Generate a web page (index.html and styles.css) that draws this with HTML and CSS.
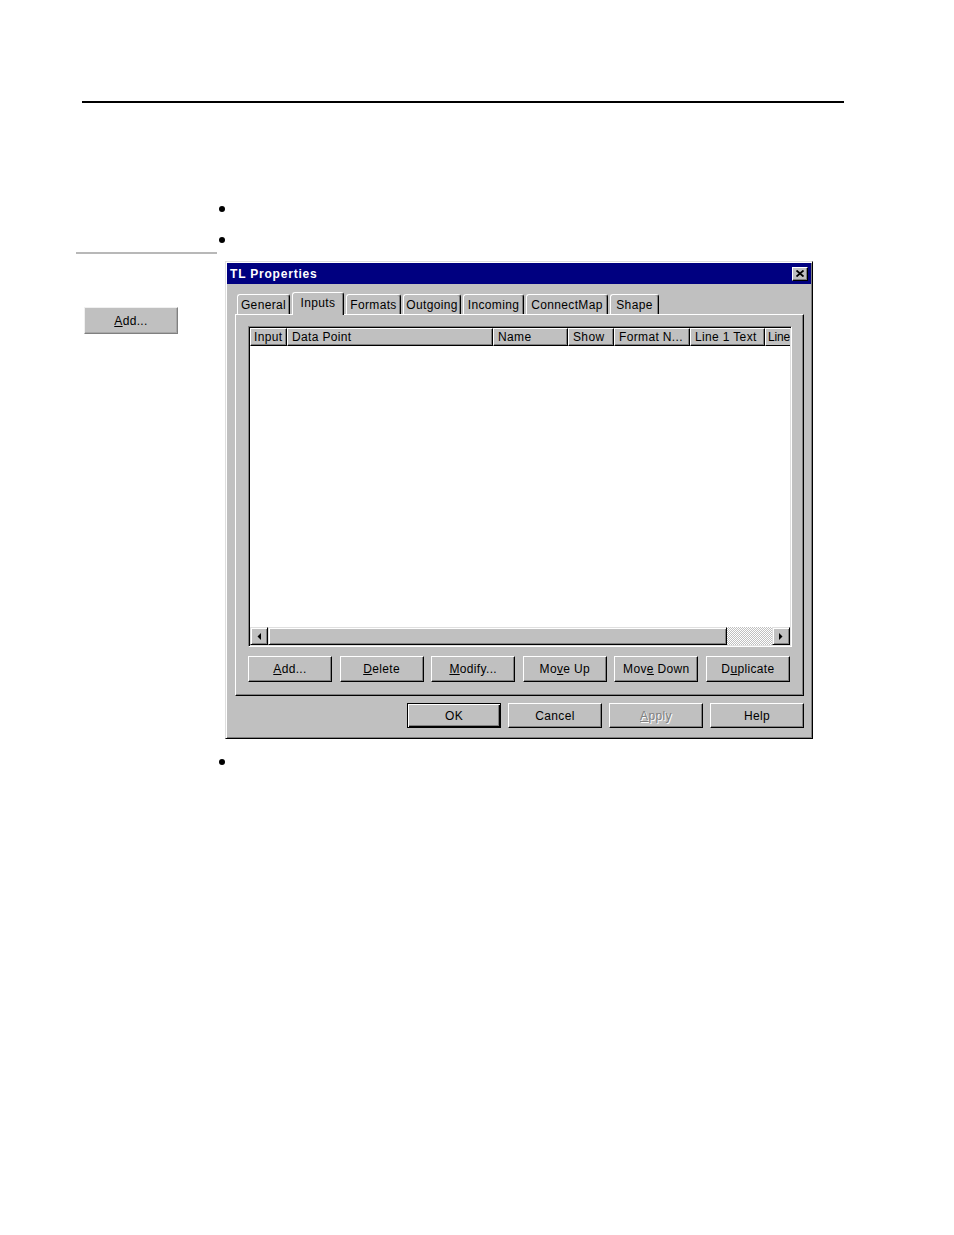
FILE: index.html
```html
<!DOCTYPE html>
<html>
<head>
<meta charset="utf-8">
<link rel="stylesheet" href="styles.css">
</head>
<body>
<div class="rule"></div>
<div class="section">
  <div class="aside">
    <div class="aside-line"></div>
    <div class="btn side-btn"><span><u>A</u>dd...</span></div>
  </div>
  <div class="main">
    <div class="dot d1"></div>
    <div class="dot d2"></div>
    <div class="dialog">
      <div class="titlebar">
        <span class="title">TL Properties</span>
        <span class="close"><svg width="8" height="7" viewBox="0 0 8 7"><path d="M0.5 0.5 L7.5 6.5 M7.5 0.5 L0.5 6.5" stroke="#000" stroke-width="1.8" fill="none"/></svg></span>
      </div>
      <div class="dlg-body">
        <div class="tabs">
          <div class="tab t-general">General</div>
          <div class="tab t-inputs active">Inputs</div>
          <div class="tab t-formats">Formats</div>
          <div class="tab t-outgoing">Outgoing</div>
          <div class="tab t-incoming">Incoming</div>
          <div class="tab t-connect">ConnectMap</div>
          <div class="tab t-shape">Shape</div>
        </div>
        <div class="panel">
          <div class="list">
            <div class="header">
              <div class="hcell c-input">Input</div>
              <div class="hcell c-dp">Data Point</div>
              <div class="hcell c-name">Name</div>
              <div class="hcell c-show">Show</div>
              <div class="hcell c-fmt">Format N...</div>
              <div class="hcell c-l1">Line 1 Text</div>
              <div class="hcell c-l2">Line</div>
            </div>
            <div class="rows"></div>
            <div class="hscroll">
              <div class="sb-btn"><svg width="4" height="7" viewBox="0 0 4 7"><polygon points="4,0 4,7 0.5,3.5" fill="#000"/></svg></div>
              <div class="sb-thumb"></div>
              <div class="sb-track"></div>
              <div class="sb-btn"><svg width="4" height="7" viewBox="0 0 4 7"><polygon points="0,0 0,7 3.5,3.5" fill="#000"/></svg></div>
            </div>
          </div>
          <div class="btn-row">
            <div class="btn"><span><u>A</u>dd...</span></div>
            <div class="btn"><span><u>D</u>elete</span></div>
            <div class="btn"><span><u>M</u>odify...</span></div>
            <div class="btn"><span>Mo<u>v</u>e Up</span></div>
            <div class="btn"><span>Mov<u>e</u> Down</span></div>
            <div class="btn"><span>D<u>u</u>plicate</span></div>
          </div>
        </div>
        <div class="dlg-buttons">
          <div class="btn big default"><span>OK</span></div>
          <div class="btn big"><span>Cancel</span></div>
          <div class="btn big disabled"><span><u>A</u>pply</span></div>
          <div class="btn big"><span>Help</span></div>
        </div>
      </div>
    </div>
    <div class="dot d3"></div>
  </div>
</div>
</body>
</html>
```
FILE: styles.css
```css
body {
  margin: 0;
  background: #fff;
  color: #000;
  font-family: "Liberation Sans", Arial, sans-serif;
  font-size: 12px;
  letter-spacing: 0.35px;
}

.rule {
  margin: 101px 0 0 82px;
  width: 762px;
  height: 2px;
  background: #000;
}

.section {
  display: flex;
  margin: 97px 0 0 76px;
}

.aside {
  width: 141px;
  flex: none;
}

.aside-line {
  margin-top: 52px;
  height: 2px;
  background: #b8b8b8;
}

.main {
  display: flex;
  flex-direction: column;
}

.dot {
  width: 6px;
  height: 6px;
  border-radius: 50%;
  background: #000;
  margin-left: 2px;
}
.d1 { margin-top: 6px; }
.d2 { margin-top: 25px; }
.d3 { margin-top: 20px; }

.dialog {
  margin: 18px 0 0 8px;
  width: 588px;
  height: 478px;
  box-sizing: border-box;
  background: #c0c0c0;
  border: 1px solid;
  border-color: #dfdfdf #000 #000 #dfdfdf;
  box-shadow: inset 1px 1px #fff, inset -1px -1px #808080;
  padding: 1px;
}

.titlebar {
  height: 21px;
  background: #000080;
  color: #fff;
  display: flex;
  align-items: center;
  justify-content: space-between;
  padding: 0 3px;
}
.title {
  font-weight: bold;
  letter-spacing: 0.8px;
}
.close {
  width: 16px;
  height: 14px;
  box-sizing: border-box;
  background: #c0c0c0;
  border: 1px solid;
  border-color: #fff #000 #000 #fff;
  box-shadow: inset -1px -1px #808080;
  display: flex;
  align-items: center;
  justify-content: center;
}

.dlg-body {
  padding: 8px 7px 9px 8px;
}

.tabs {
  display: flex;
  align-items: flex-end;
  height: 22px;
  padding-left: 2px;
}
.tab {
  height: 20px;
  box-sizing: border-box;
  margin-right: 2px;
  border: 1px solid;
  border-bottom: none;
  border-color: #fff #000 #000 #fff;
  box-shadow: inset -1px 0 #808080;
  border-radius: 3px 3px 0 0;
  display: flex;
  align-items: center;
  justify-content: center;
  white-space: nowrap;
  background: #c0c0c0;
}
.tab.active {
  height: 23px;
  margin-bottom: -1px;
  position: relative;
  z-index: 1;
  padding-bottom: 2px;
}
.t-general { width: 53px; }
.t-inputs { width: 52px; }
.t-formats { width: 55px; }
.t-outgoing { width: 58px; }
.t-incoming { width: 61px; }
.t-connect { width: 82px; }
.t-shape { width: 49px; }

.panel {
  width: 569px;
  height: 382px;
  box-sizing: border-box;
  border: 1px solid;
  border-color: #fff #000 #000 #fff;
  box-shadow: inset -1px -1px #808080;
  padding: 11px 11px 13px 12px;
}

.list {
  height: 321px;
  box-sizing: border-box;
  border: 1px solid;
  border-color: #808080 #fff #fff #808080;
  box-shadow: inset 1px 1px #000, inset -1px -1px #dfdfdf;
  padding: 1px;
  background: #fff;
  display: flex;
  flex-direction: column;
  overflow: hidden;
}
.header {
  display: flex;
  height: 18px;
  flex: none;
  overflow: hidden;
}
.hcell {
  flex: none;
  box-sizing: border-box;
  height: 18px;
  background: #c0c0c0;
  border: 1px solid;
  border-color: #fff #000 #000 #fff;
  box-shadow: inset -1px -1px #808080;
  padding-left: 4px;
  display: flex;
  align-items: center;
  white-space: nowrap;
  overflow: hidden;
}
.c-input { width: 37px; padding-left: 3px; }
.c-dp { width: 206px; }
.c-name { width: 75px; }
.c-show { width: 46px; }
.c-fmt { width: 76px; }
.c-l1 { width: 75px; }
.c-l2 {
  width: 25px;
  padding-left: 2px;
  letter-spacing: -0.2px;
  border-right: none;
  box-shadow: none;
}

.rows {
  flex: 1;
  background: #fff;
}

.hscroll {
  height: 18px;
  flex: none;
  display: flex;
  background: #c0c0c0;
}
.sb-btn, .sb-thumb {
  flex: none;
  height: 18px;
  box-sizing: border-box;
  background: #c0c0c0;
  border: 1px solid;
  border-color: #dfdfdf #000 #000 #dfdfdf;
  box-shadow: inset 1px 1px #fff, inset -1px -1px #808080;
}
.sb-btn {
  width: 18px;
  display: flex;
  align-items: center;
  justify-content: center;
}
.sb-thumb { width: 459px; }
.sb-track {
  flex: 1;
  background: repeating-conic-gradient(#c0c0c0 0 25%, #fff 0 50%) 0 0 / 2px 2px;
}

.btn {
  width: 84px;
  height: 26px;
  box-sizing: border-box;
  background: #c0c0c0;
  border: 1px solid;
  border-color: #fff #000 #000 #fff;
  box-shadow: inset -1px -1px #808080;
  display: flex;
  align-items: center;
  justify-content: center;
  white-space: nowrap;
}
.btn u { text-underline-offset: 1px; }

.btn-row {
  display: flex;
  justify-content: space-between;
  width: 542px;
  margin-top: 9px;
}

.dlg-buttons {
  display: flex;
  justify-content: flex-end;
  gap: 7px;
  margin-top: 7px;
}
.btn.big {
  width: 94px;
  height: 25px;
}
.btn.default {
  border-color: #000;
  box-shadow: inset 1px 1px #fff, inset -1px -1px #000, inset -2px -2px #808080;
}
.btn.disabled {
  color: #808080;
  text-shadow: 1px 1px #fff;
}

.side-btn {
  width: 94px;
  height: 27px;
  margin: 53px 0 0 8px;
  border-color: #f0f0f0 #808080 #808080 #f0f0f0;
  box-shadow: inset -1px -1px #a8a8a8;
}
```
